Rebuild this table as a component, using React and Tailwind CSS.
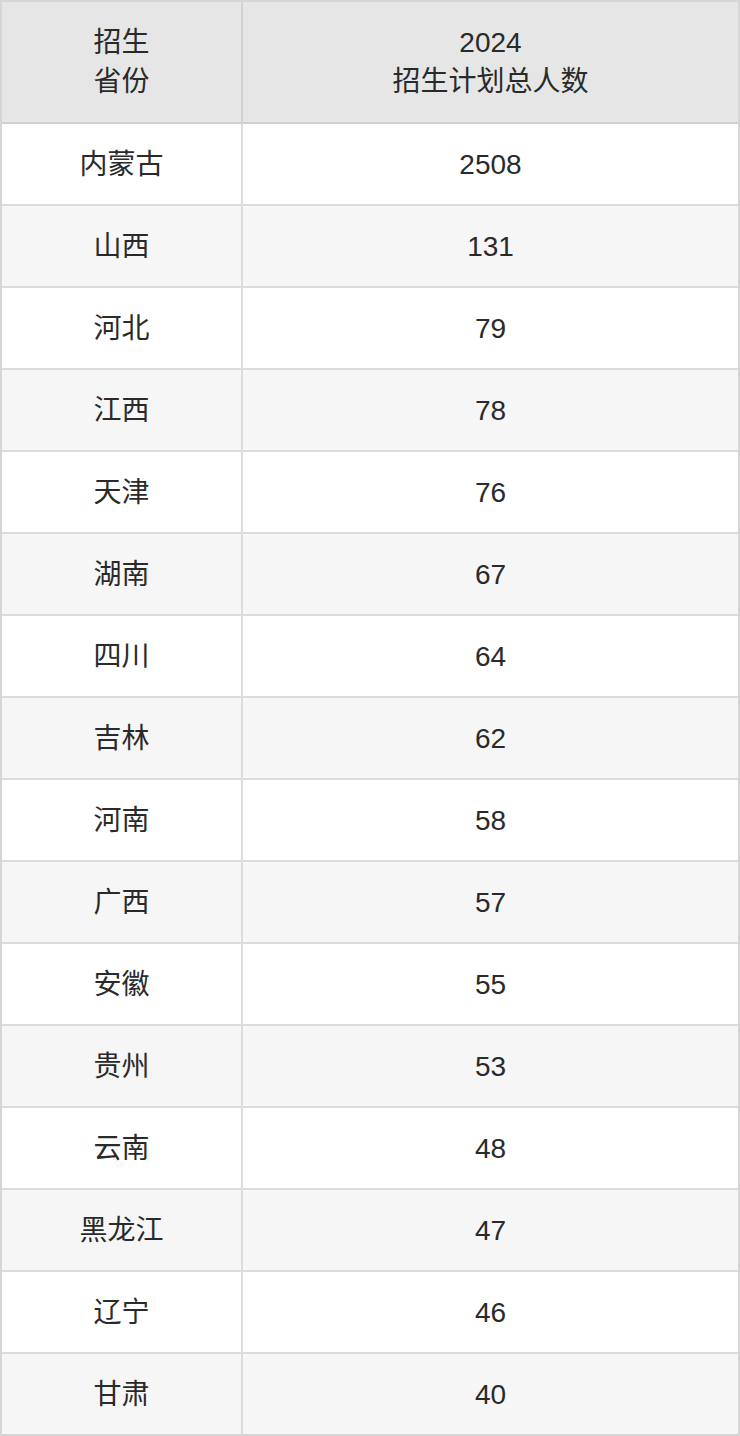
import React from "react";

const rows = [
  ["内蒙古", "2508"],
  ["山西", "131"],
  ["河北", "79"],
  ["江西", "78"],
  ["天津", "76"],
  ["湖南", "67"],
  ["四川", "64"],
  ["吉林", "62"],
  ["河南", "58"],
  ["广西", "57"],
  ["安徽", "55"],
  ["贵州", "53"],
  ["云南", "48"],
  ["黑龙江", "47"],
  ["辽宁", "46"],
  ["甘肃", "40"],
];

export default function App() {
  return (
    <div
      className="w-[740px] bg-white text-[#2a2a2a] text-[28px] leading-[39px]"
      style={{ fontFamily: '"Liberation Sans", Arial, "Noto Sans CJK SC", sans-serif' }}
    >
      <div className="border-2 border-[#d6d6d6]">
        <div className="flex h-[122px] bg-[#e6e6e6] border-b-2 border-[#cfcfcf]">
          <div className="w-[241px] shrink-0 border-r-2 border-[#d3d3d3] flex items-center justify-center text-center">
            <div>
              招生
              <br />
              省份
            </div>
          </div>
          <div className="flex-1 flex items-center justify-center text-center">
            <div>
              2024
              <br />
              招生计划总人数
            </div>
          </div>
        </div>
        {rows.map(([p, n], i) => (
          <div
            key={p}
            className={`flex ${i === rows.length - 1 ? "h-[80px]" : "h-[82px] border-b-2 border-[#dcdcdc]"} ${
              i % 2 === 1 ? "bg-[#f6f6f6]" : "bg-white"
            }`}
          >
            <div className="w-[241px] shrink-0 border-r-2 border-[#dcdcdc] flex items-center justify-center">
              {p}
            </div>
            <div className="flex-1 flex items-center justify-center">{n}</div>
          </div>
        ))}
      </div>
    </div>
  );
}
